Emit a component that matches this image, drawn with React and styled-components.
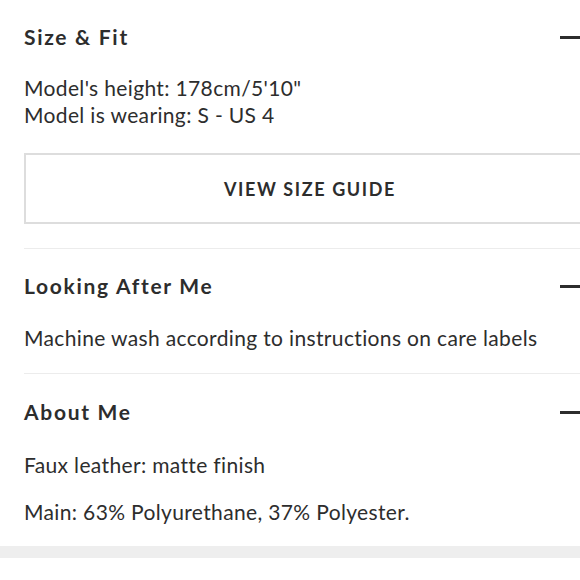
import React from 'react';
import styled, { createGlobalStyle } from 'styled-components';

const GlobalStyle = createGlobalStyle`
  html, body {
    margin: 0;
    padding: 0;
    background: #ffffff;
    overflow: hidden;
  }
  body {
    font-family: 'Lato', 'Liberation Sans', sans-serif;
    color: #2d2d2d;
  }
`;

const Page = styled.div`
  width: 580px;
  height: 580px;
  overflow: hidden;
  background: #ffffff;
`;

const Inner = styled.div`
  width: 574px;
  padding-left: 24px;
`;

const Section = styled.section`
  padding: ${(p) => p.$top}px 0 ${(p) => p.$bottom}px;
  border-bottom: ${(p) => (p.$last ? 'none' : '1px solid #ececec')};
`;

const Header = styled.div`
  display: flex;
  align-items: center;
  justify-content: space-between;
  height: 24px;
`;

const Title = styled.h3`
  margin: 0;
  font-size: 21px;
  line-height: 24px;
  font-weight: 700;
  letter-spacing: 1.7px;
`;

const Minus = styled.span`
  display: block;
  width: 20px;
  height: 3px;
  margin-right: 18px;
  background: #2d2d2d;
`;

const Body = styled.div`
  margin-top: ${(p) => p.$gap}px;
  display: flex;
  flex-direction: column;
  gap: ${(p) => p.$spacing || 0}px;
`;

const Text = styled.p`
  margin: 0;
  font-size: 21px;
  line-height: 27px;
  font-weight: 400;
  letter-spacing: 0.35px;
`;

const GuideButton = styled.button`
  display: flex;
  align-items: center;
  justify-content: center;
  width: 572px;
  height: 71px;
  margin-top: 25px;
  padding: 0;
  background: #ffffff;
  border: 2px solid #dddddd;
  font-family: 'Lato', 'Liberation Sans', sans-serif;
  font-size: 18px;
  font-weight: 700;
  letter-spacing: 1.6px;
  color: #2d2d2d;
  cursor: pointer;
`;

const Band = styled.div`
  height: 12px;
  background: #eeeeee;
`;

const AccordionItem = ({ title, top, bottom, last, children }) => (
  <Section $top={top} $bottom={bottom} $last={last}>
    <Header>
      <Title>{title}</Title>
      <Minus />
    </Header>
    {children}
  </Section>
);

export default function App() {
  return (
    <Page>
      <GlobalStyle />
      <Inner>
        <AccordionItem title="Size & Fit" top={25} bottom={24}>
          <Body $gap={25}>
            <Text>
              Model's height: 178cm/5'10"
              <br />
              Model is wearing: S - US 4
            </Text>
          </Body>
          <GuideButton>VIEW SIZE GUIDE</GuideButton>
        </AccordionItem>
        <AccordionItem title="Looking After Me" top={25} bottom={22}>
          <Body $gap={26}>
            <Text>Machine wash according to instructions on care labels</Text>
          </Body>
        </AccordionItem>
        <AccordionItem title="About Me" top={26} bottom={21} last>
          <Body $gap={27} $spacing={20}>
            <Text>Faux leather: matte finish</Text>
            <Text>Main: 63% Polyurethane, 37% Polyester.</Text>
          </Body>
        </AccordionItem>
      </Inner>
      <Band />
    </Page>
  );
}
